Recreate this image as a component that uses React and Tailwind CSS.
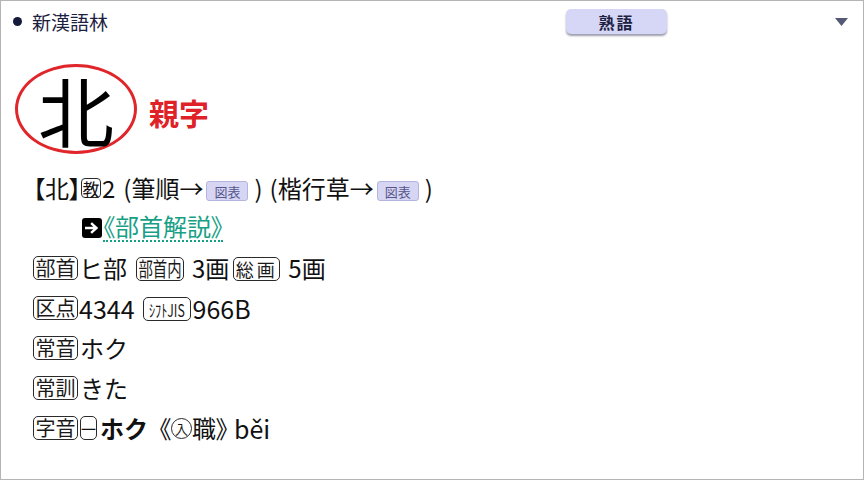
import React from 'react';

const jp = { fontFamily: '"Noto Sans CJK JP", "Noto Sans", sans-serif' };

function Label({ children, w = 'w-[45px]', squeeze = false, size = 'text-[20px]' }) {
  return (
    <span className={`inline-flex ${w} h-[24px] shrink-0 items-center justify-center overflow-visible rounded-[5px] border-[1.5px] border-[#2a2a2a] ${size} leading-none text-[#1a1a1a]`}>
      <span className={squeeze ? 'scale-x-[0.72] whitespace-nowrap' : 'whitespace-nowrap'}>{children}</span>
    </span>
  );
}

function ZuhyoButton() {
  return (
    <span className="inline-flex h-[20px] w-[42px] shrink-0 items-center justify-center rounded-[3px] border border-[#b4b4dc] bg-[#d6d6f4] text-[13px] leading-none text-[#55558a]">
      図表
    </span>
  );
}

function Line({ children, className = '' }) {
  return <div className={`flex h-[40px] items-center whitespace-nowrap text-[24px] leading-none text-[#111] ${className}`}>{children}</div>;
}

export default function App() {
  return (
    <div style={jp} className="box-border h-[480px] w-[864px] overflow-hidden border border-[#b4b4b4] bg-white">
      {/* header */}
      <div className="flex h-[41px] items-center">
        <div className="flex w-[565px] items-center pl-[12px]">
          <span className="mr-[10px] h-[9px] w-[9px] rounded-full bg-[#141a3c]" />
          <span className="text-[19px] leading-none text-[#1c2040]">新漢語林</span>
        </div>
        <div className="flex h-[25px] w-[101px] items-center justify-center rounded-[5px] bg-[#d6d6f6] text-[16px] font-bold leading-none tracking-[2px] text-[#1c2040] shadow-[0_2px_2px_rgba(80,80,110,0.55)]">
          熟語
        </div>
        <div className="flex flex-1 justify-end pr-[15px]">
          <svg width="13" height="8" viewBox="0 0 13 8">
            <polygon points="0,0 13,0 6.5,8" fill="#555a74" />
          </svg>
        </div>
      </div>

      {/* big character */}
      <div className="mt-[22px] flex items-center pl-[14px]">
        <div className="flex h-[90px] w-[122px] items-center justify-center rounded-[50%] border-[3px] border-[#e0262b]">
          <span className="text-[76px] leading-none text-black">北</span>
        </div>
        <span className="ml-[12px] mt-[6px] text-[30px] font-bold leading-none text-[#de2228]">親字</span>
      </div>

      {/* body */}
      <div className="mt-[14px] pl-[32px]">
        <Line>
          <span className="[font-feature-settings:'palt']">【</span>
          <span>北</span>
          <span className="[font-feature-settings:'palt']">】</span>
          <span className="inline-flex h-[20px] w-[20px] items-center justify-center rounded-[4px] border border-[#2a2a2a] text-[17px] leading-none">教</span>
          <span className="ml-[1px]">2</span>
          <span className="ml-[8px]">(筆順→</span>
          <span className="ml-[3px]"><ZuhyoButton /></span>
          <span className="ml-[6px]">)</span>
          <span className="ml-[7px]">(楷行草→</span>
          <span className="ml-[3px]"><ZuhyoButton /></span>
          <span className="ml-[6px]">)</span>
        </Line>
        <Line className="pl-[49px]">
          <span className="inline-flex h-[20px] w-[20px] items-center justify-center rounded-[3px] bg-black">
            <svg width="14" height="12" viewBox="0 0 14 12">
              <path d="M1 6 H11 M7 2 L11.5 6 L7 10" stroke="white" strokeWidth="2.4" fill="none" strokeLinecap="square" />
            </svg>
          </span>
          <span className="ml-[1px] border-b-2 border-dotted border-[#17a085] pb-[2px] text-[#17a085] [font-feature-settings:'palt']">《部首解説》</span>
        </Line>
        <Line>
          <Label>部首</Label>
          <span className="ml-[1px]">ヒ部</span>
          <span className="ml-[9px]"><Label w="w-[48px]" squeeze>部首内</Label></span>
          <span className="ml-[8px]">3画</span>
          <span className="ml-[4px]"><Label w="w-[47px]" size="text-[18px]"><span className="tracking-[3px]">総画</span></Label></span>
          <span className="ml-[8px]">5画</span>
        </Line>
        <Line>
          <Label>区点</Label>
          <span className="ml-[1px] text-[25px]">4344</span>
          <span className="ml-[8px]"><Label w="w-[48px]" size="text-[17px]" squeeze>ｼﾌﾄJIS</Label></span>
          <span className="ml-[2px] text-[25px]">966B</span>
        </Line>
        <Line>
          <Label>常音</Label>
          <span className="ml-[2px]">ホク</span>
        </Line>
        <Line>
          <Label>常訓</Label>
          <span className="ml-[2px]">きた</span>
        </Line>
        <Line>
          <Label>字音</Label>
          <span className="ml-[2px] inline-flex h-[24px] w-[17px] items-center justify-center rounded-[5px] border-[1.5px] border-[#2a2a2a] text-[15px] leading-none">一</span>
          <span className="ml-[3px] font-bold">ホク</span>
          <span className="ml-[11px] [font-feature-settings:'palt']">《</span>
          <span className="inline-flex h-[21px] w-[21px] items-center justify-center rounded-full border-[1.5px] border-[#2a2a2a] text-[13px] leading-none">入</span>
          <span>職</span>
          <span className="[font-feature-settings:'palt']">》</span>
          <span className="ml-[6px] text-[25px]">běi</span>
        </Line>
      </div>
    </div>
  );
}
